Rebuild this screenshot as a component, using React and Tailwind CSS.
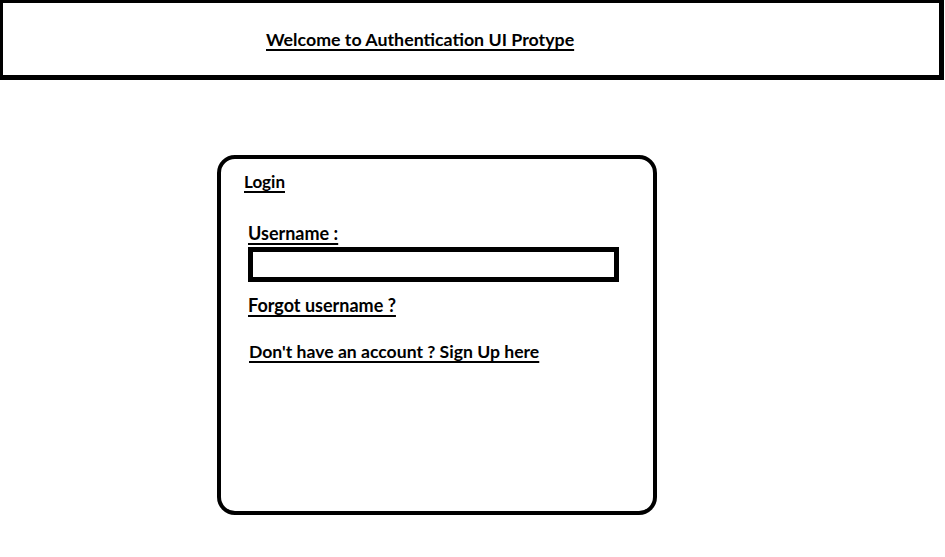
export default function App() {
  const f = { fontFamily: "Lato, 'Open Sans', sans-serif" };
  return (
    <div className="min-h-[557px] w-[945px] bg-white text-black font-bold" style={f}>
      <header className="flex h-[80px] w-[944px] items-center border-t-[3px] border-l-[3px] border-r-[5px] border-b-[5px] border-black pl-[263px]">
        <h1 className="text-[17.8px] leading-[20px] underline decoration-2 underline-offset-[3px]">
          Welcome to Authentication UI Protype
        </h1>
      </header>
      <div className="ml-[217px] mt-[75px] flex h-[360px] w-[440px] flex-col rounded-[18px] border-[4px] border-black pl-[23px] pt-[13px]">
        <div className="text-[17px] leading-[20px] underline decoration-2 underline-offset-[3px]">Login</div>
        <div className="mt-[31px] pl-[4px] flex flex-col items-start">
          <label className="text-[18px] leading-[20px] underline decoration-2 underline-offset-[3px]">Username :</label>
          <div className="mt-[4px] h-[35px] w-[371px] border-[5px] border-black bg-white" />
          <a className="mt-[13px] text-[18px] leading-[20px] underline decoration-2 underline-offset-[3px]">Forgot username ?</a>
          <a className="mt-[27px] pl-[1px] text-[17.6px] leading-[20px] underline decoration-2 underline-offset-[3px]">Don't have an account ? Sign Up here</a>
        </div>
      </div>
    </div>
  );
}
